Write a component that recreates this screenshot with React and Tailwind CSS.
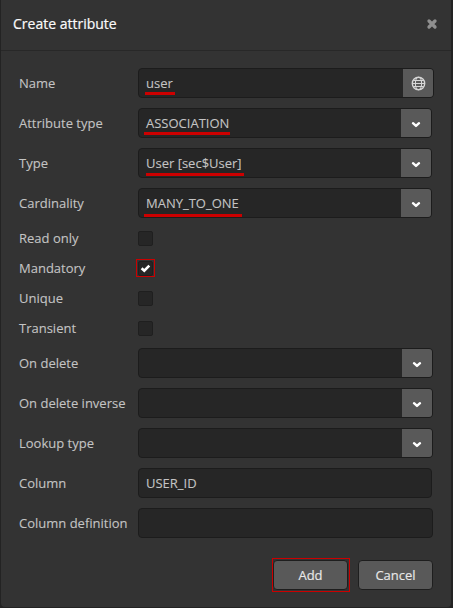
import React from 'react';

const Chevron = () => (
  <svg width="10" height="7" viewBox="0 0 10 7" className="mt-[3px]" fill="none" stroke="#fff" strokeWidth="2.4" strokeLinecap="round" strokeLinejoin="round">
    <path d="M2 2.2 L5 4.9 L8 2.2" />
  </svg>
);

const Globe = () => (
  <svg width="15" height="15" viewBox="0 0 15 15" fill="none" stroke="#d6d6d6" strokeWidth="1.1">
    <circle cx="7.5" cy="7.5" r="6.2" strokeWidth="1.4" />
    <ellipse cx="7.5" cy="7.5" rx="3.1" ry="6.2" />
    <path d="M1.2 7.5H13.8M2.3 4.5H12.7M2.3 10.5H12.7" />
  </svg>
);

const fields = {
  wide: 'w-[296px]',
  mid: 'w-[295px]',
  narrow: 'w-[294px]',
};

function Field({ label, value, mark, size = 'mid', button }) {
  return (
    <div className="flex h-[30px] items-center">
      <label className="w-[119px] shrink-0 whitespace-nowrap leading-[30px]">{label}</label>
      <div className={`relative flex h-[30px] overflow-hidden rounded-[4px] border border-[#1c1c1c] bg-[#262626] ${fields[size]}`}>
        <span className="flex-1 pl-[7px] leading-[28px]">{value}</span>
        {button && (
          <span className="flex w-[30px] items-center justify-center bg-[#595959]">
            {button === 'globe' ? <Globe /> : <Chevron />}
          </span>
        )}
        {mark && <i className={`absolute h-[3px] bg-[#cc0000] ${mark}`} />}
      </div>
    </div>
  );
}

function Check({ label, checked }) {
  return (
    <div className="flex h-[30px] items-center">
      <label className="w-[119px] shrink-0 leading-[30px]">{label}</label>
      <span className="relative flex h-[15px] w-[15px] items-center justify-center rounded-[2px] border border-[#1f1f1f] bg-[#262626]">
        {checked && (
          <>
            <svg width="11" height="9" viewBox="0 0 11 9" className="shrink-0" fill="none" stroke="#fff" strokeWidth="2.6">
              <path d="M1.6 4.2 L4.3 6.7 L9.3 1.7" />
            </svg>
            <i className="absolute -left-[3px] -top-[3px] h-[18px] w-[19px] border border-[#cc0000]" />
          </>
        )}
      </span>
    </div>
  );
}

function Button({ children }) {
  return (
    <button className="h-[30px] w-[75px] rounded-[4px] border border-[#1e1e1e] bg-[#595959] pt-px text-[#e8e8e8] [-webkit-text-stroke:0.15px_#e8e8e8]">
      {children}
    </button>
  );
}

export default function App() {
  return (
    <div className="h-[608px] w-[453px] overflow-hidden bg-[#232323] pl-px pr-[2px] font-['Open_Sans',sans-serif] text-[13px] text-[#c4c4c4] [-webkit-text-stroke:0.1px_#c4c4c4]">
      <div className="flex h-[607px] flex-col rounded-b-[4px] bg-[#333333]">
        <header className="flex h-[51px] items-center justify-between border-b border-[#282828] pb-[3px] pl-3 pr-[13px]">
          <h1 className="text-[14px] text-[#fafafa] [-webkit-text-stroke:0.2px_#fafafa]">Create attribute</h1>
          <svg width="12" height="12" viewBox="0 0 12 12" stroke="#8f8f8f" strokeWidth="3.3" strokeLinecap="round">
            <path d="M3 3 L9 9 M9 3 L3 9" />
          </svg>
        </header>
        <main className="flex flex-col pl-[18px] pt-[17px]">
          <div className="flex flex-col gap-[10px]">
            <Field label="Name" value="user" size="wide" button="globe" mark="left-[6px] top-[23px] w-[30px]" />
            <Field label="Attribute type" value="ASSOCIATION" size="narrow" button="down" mark="left-[5px] top-[23px] w-[86px]" />
            <Field label="Type" value="User [sec$User]" size="narrow" button="down" mark="left-[7px] top-[24px] w-[98px]" />
            <Field label="Cardinality" value="MANY_TO_ONE" size="narrow" button="down" mark="left-[5px] top-[25px] w-[98px]" />
          </div>
          <div className="flex flex-col py-[5px]">
            <Check label="Read only" />
            <Check label="Mandatory" checked />
            <Check label="Unique" />
            <Check label="Transient" />
          </div>
          <div className="flex flex-col gap-[10px]">
            <Field label="On delete" button="down" />
            <Field label="On delete inverse" button="down" />
            <Field label="Lookup type" button="down" />
            <Field label="Column" value="USER_ID" size="narrow" />
            <Field label="Column definition" />
          </div>
        </main>
        <footer className="mt-[22px] flex gap-[10px] pl-[272px]">
          <div className="relative flex">
            <Button>Add</Button>
            <i className="absolute -left-px -top-[2px] h-[34px] w-[78px] border border-[#cc0000]" />
          </div>
          <Button>Cancel</Button>
        </footer>
      </div>
    </div>
  );
}
